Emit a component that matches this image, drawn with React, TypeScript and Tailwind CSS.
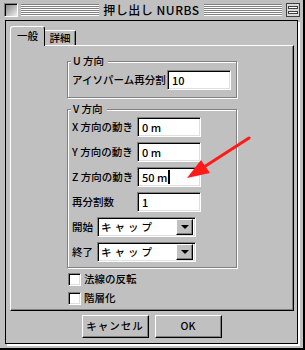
import React from "react";

const sunken =
  "bg-white border border-t-[#808080] border-l-[#808080] border-r-white border-b-white shadow-[inset_1px_1px_0_#000,inset_-1px_-1px_0_#dfdfdf]";
const raised =
  "bg-[#c0c0c0] border border-t-white border-l-white border-r-black border-b-black shadow-[inset_-1px_-1px_0_#808080]";

function Field({ value, width, cursor }: { value: string; width: string; cursor?: boolean }) {
  return (
    <div className={`${sunken} ${width} h-[20px] flex items-center pl-[4px] text-[11px]`}>
      <span>{value}</span>
      {cursor && <span className="ml-[1px] w-[2px] h-[14px] bg-black" />}
    </div>
  );
}

function Select({ value }: { value: string }) {
  return (
    <div className={`${sunken} w-[99px] h-[20px] flex items-center pl-[3px] pr-[2px]`}>
      <span className="flex-1 tracking-[3px]">{value}</span>
      <div className={`${raised} w-[17px] h-[16px] flex items-center justify-center`}>
        <div className="w-0 h-0 border-l-[4px] border-r-[4px] border-t-[4px] border-l-transparent border-r-transparent border-t-black" />
      </div>
    </div>
  );
}

function Group({ title, className, children }: { title: string; className: string; children: React.ReactNode }) {
  return (
    <div
      className={`mx-auto w-[170px] border border-[#808080] shadow-[inset_1px_1px_0_#fff,1px_1px_0_#fff] ${className}`}
    >
      <div className="ml-[3px] -mt-[8px] px-[2px] w-fit bg-[#c0c0c0] leading-[14px] pr-[4px]">{title}</div>
      {children}
    </div>
  );
}

function Row({ label, labelWidth, children }: { label: string; labelWidth: string; children: React.ReactNode }) {
  return (
    <div className="flex items-center pl-[4px] h-[20px]">
      <span className={`${labelWidth} shrink-0 whitespace-nowrap`}>{label}</span>
      {children}
    </div>
  );
}

function Check({ label }: { label: string }) {
  return (
    <div className="flex items-center h-[13px] gap-[3px]">
      <div className={`${sunken} w-[13px] h-[13px]`} />
      <span>{label}</span>
    </div>
  );
}

const stripes =
  "flex-1 h-[12px] bg-[repeating-linear-gradient(to_bottom,#808080_0,#808080_1px,#ffffff_1px,#ffffff_2px)]";

export default function App() {
  return (
    <div
      className="relative w-[305px] h-[350px] bg-[#c0c0c0] border-r-2 border-b-2 border-black text-[10.5px] font-medium text-black leading-none"
      style={{ fontFamily: '"Noto Sans CJK JP", "Liberation Sans", sans-serif' }}
    >
      {/* title bar */}
      <div className="h-[20px] flex items-center pl-[4px] pr-[3px]">
        <div className="w-[14px] h-[14px] border border-t-[#808080] border-l-[#808080] border-r-white border-b-white bg-gradient-to-br from-[#808080] to-[#f0f0f0] shadow-[inset_1px_1px_0_#000]" />
        <div className={`${stripes} ml-[3px]`} />
        <span className="px-[4px] text-[12px] tracking-[0.5px]">押し出し NURBS</span>
        <div className={`${stripes} mr-[4px]`} />
        <div className="w-[14px] h-[14px] border border-[#404040] bg-[#d8d8d8] flex flex-col justify-center gap-[2px] px-[1px]">
          <div className="h-[3px] border border-[#404040] bg-white" />
          <div className="h-[3px] border border-[#404040] bg-white" />
        </div>
      </div>

      {/* content frame */}
      <div className="ml-[5px] w-[293px] h-[324px] border border-black shadow-[2px_2px_0_#fff] pl-[4px] pt-[5px]">
        {/* tabs */}
        <div className="flex items-end h-[19px]">
          <div className="w-[35px] h-[20px] border-t border-l border-r border-t-white border-l-white border-r-black rounded-t-[3px] flex items-center justify-center relative z-10 bg-[#c0c0c0] -mb-[1px]">
            一般
          </div>
          <div className="w-[31px] h-[15px] border-t border-r border-t-white border-r-black rounded-tr-[2px] flex items-center justify-center shadow-[inset_-1px_0_0_#808080]">
            詳細
          </div>
        </div>

        {/* panel */}
        <div className="w-[284px] h-[266px] border border-t-white border-l-white border-r-black border-b-black shadow-[inset_-1px_-1px_0_#808080] flex flex-col">
          <Group title="U 方向" className="mt-[15px] pb-[7px]">
            <div className="mt-[2px]">
              <Row label="アイソパーム再分割" labelWidth="w-[95px]">
                <Field value="10" width="w-[64px]" />
              </Row>
            </div>
          </Group>

          <Group title="V 方向" className="mt-[11px] pb-[5px]">
            <div className="mt-[1px] flex flex-col gap-[5px]">
              <Row label="X 方向の動き" labelWidth="w-[65px]">
                <Field value="0 m" width="w-[64px]" />
              </Row>
              <Row label="Y 方向の動き" labelWidth="w-[65px]">
                <Field value="0 m" width="w-[64px]" />
              </Row>
              <Row label="Z 方向の動き" labelWidth="w-[65px]">
                <Field value="50 m" width="w-[64px]" cursor />
              </Row>
              <Row label="再分割数" labelWidth="w-[65px]">
                <Field value="1" width="w-[64px]" />
              </Row>
              <Row label="開始" labelWidth="w-[25px]">
                <Select value="キャップ" />
              </Row>
              <Row label="終了" labelWidth="w-[25px]">
                <Select value="キャップ" />
              </Row>
            </div>
          </Group>

          <div className="mt-[5px] ml-[57px] flex flex-col gap-[6px]">
            <Check label="法線の反転" />
            <Check label="階層化" />
          </div>
        </div>

        {/* buttons */}
        <div className="flex justify-center gap-[6px] mt-[4px] pr-[4px]">
          <button className={`${raised} w-[67px] h-[23px] tracking-[1px]`}>キャンセル</button>
          <button className={`${raised} w-[67px] h-[23px]`}>OK</button>
        </div>
      </div>

      {/* red annotation arrow */}
      <svg className="absolute left-0 top-0 pointer-events-none" width="305" height="350">
        <line x1="249" y1="138" x2="204" y2="167" stroke="#ff1a1a" strokeWidth="3" strokeLinecap="round" />
        <polygon points="187,178 201,160 210,173" fill="#ff1a1a" />
      </svg>
    </div>
  );
}
